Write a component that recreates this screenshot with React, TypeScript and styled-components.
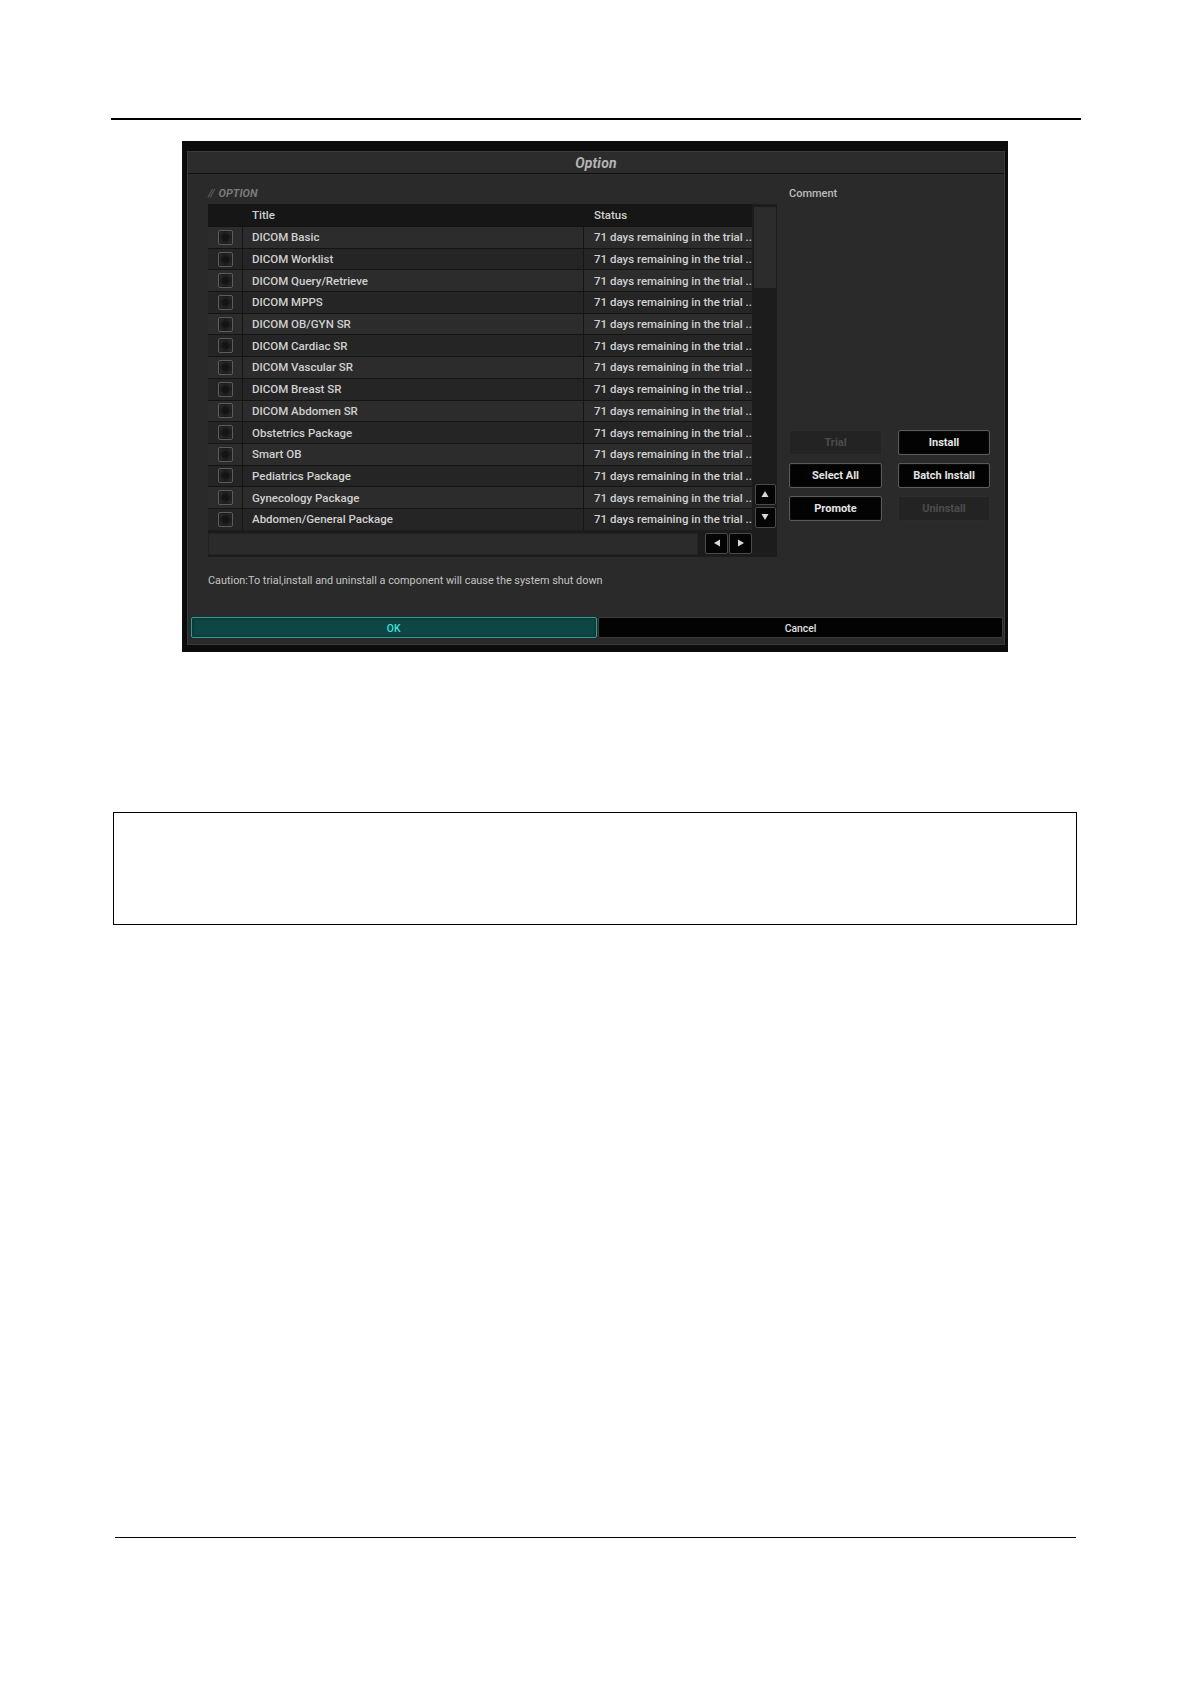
import React from "react";
import styled, { createGlobalStyle } from "styled-components";

const GlobalStyle = createGlobalStyle`
  html, body {
    margin: 0;
    padding: 0;
    background: #ffffff;
  }
  body {
    font-family: Roboto, "Liberation Sans", Arial, sans-serif;
  }
`;

const options = [
  "DICOM Basic",
  "DICOM Worklist",
  "DICOM Query/Retrieve",
  "DICOM MPPS",
  "DICOM OB/GYN SR",
  "DICOM Cardiac SR",
  "DICOM Vascular SR",
  "DICOM Breast SR",
  "DICOM Abdomen SR",
  "Obstetrics Package",
  "Smart OB",
  "Pediatrics Package",
  "Gynecology Package",
  "Abdomen/General Package",
];

const STATUS = "71 days remaining in the trial ..";

const Page = styled.div`
  width: 1191px;
  min-height: 1684px;
  padding-top: 118px;
  box-sizing: border-box;
  display: flex;
  flex-direction: column;
`;

const Rule = styled.div<{ $left: number; $width: number; $thick: number; $top?: number }>`
  margin-top: ${(p) => p.$top ?? 0}px;
  margin-left: ${(p) => p.$left}px;
  width: ${(p) => p.$width}px;
  height: 0;
  border-top: ${(p) => p.$thick}px solid #000;
`;

const Dialog = styled.div`
  margin-top: 21px;
  margin-left: 182px;
  width: 826px;
  height: 511px;
  box-sizing: border-box;
  background: #0c0c0c;
  padding: 10px 3px 7px 5px;
`;

const Panel = styled.div`
  height: 100%;
  box-sizing: border-box;
  background: #2a2a2a;
  border: 1px solid #3a3a3a;
  display: flex;
  flex-direction: column;
`;

const TitleBar = styled.div`
  height: 21px;
  line-height: 22px;
  text-align: center;
  background: #2c2c2c;
  border-bottom: 1px solid #111;
  color: #b4b4b4;
  font-size: 14px;
  font-style: italic;
  font-weight: 700;
  letter-spacing: 0.2px;
`;

const Body = styled.div`
  flex: 1;
  padding: 13px 0 0 20px;
  display: flex;
  flex-direction: column;
`;

const Main = styled.div`
  display: flex;
  gap: 12px;
`;

const LeftPane = styled.div`
  width: 569px;
  display: flex;
  flex-direction: column;
`;

const SectionLabel = styled.div`
  height: 14px;
  line-height: 14px;
  font-size: 11px;
  font-style: italic;
  font-weight: 700;
  color: #7a7a7a;
  margin-bottom: 3px;
  display: flex;
  gap: 5px;
`;

const Slashes = styled.span`
  color: #6a6a6a;
  font-weight: 400;
  letter-spacing: -1px;
`;

const TableBox = styled.div`
  background: #1c1c1c;
  display: grid;
  grid-template-columns: 544px 25px;
  grid-template-rows: auto 27px;
`;

const List = styled.div`
  display: flex;
  flex-direction: column;
`;

const Row = styled.div<{ $head?: boolean; $alt?: boolean }>`
  display: grid;
  grid-template-columns: 34px 341px 169px;
  height: ${(p) => (p.$head ? 22 : 21.7)}px;
  box-sizing: border-box;
  background: ${(p) => (p.$head ? "#161616" : p.$alt ? "#252525" : "#2c2c2c")};
  border-top: ${(p) => (p.$head ? "0" : "1px solid #141414")};
  color: #d0d0d0;
  font-size: 11.5px;
  font-weight: 500;
`;

const Cell = styled.div<{ $pad?: number; $center?: boolean }>`
  display: flex;
  align-items: center;
  justify-content: ${(p) => (p.$center ? "center" : "flex-start")};
  padding-left: ${(p) => p.$pad ?? 0}px;
  border-left: 1px solid #151515;
  white-space: nowrap;
  overflow: hidden;
  &:first-child {
    border-left: 0;
  }
`;

const Check = styled.div`
  width: 15px;
  height: 15px;
  box-sizing: border-box;
  border: 1px solid #5c5c5c;
  border-radius: 2px;
  background: radial-gradient(circle at 50% 50%, #141414 30%, #3a3a3a 100%);
  box-shadow: inset 0 0 2px #000;
`;

const ScrollCol = styled.div`
  grid-row: 1;
  grid-column: 2;
  display: flex;
  flex-direction: column;
  align-items: center;
  padding: 3px 0 0 1px;
`;

const Thumb = styled.div`
  width: 22px;
  height: 81px;
  background: #2c2c2c;
`;

const Spacer = styled.div`
  flex: 1;
`;

const ArrowButton = styled.div<{ $w?: number }>`
  width: ${(p) => p.$w ?? 21}px;
  height: 21px;
  box-sizing: border-box;
  background: #050505;
  border: 1px solid #4a4a4a;
  border-radius: 2px;
  display: flex;
  align-items: center;
  justify-content: center;
  margin-bottom: 2px;
`;

const BottomBar = styled.div`
  grid-row: 2;
  grid-column: 1;
  display: flex;
  align-items: flex-start;
  padding-top: 3px;
  gap: 7px;
`;

const HBar = styled.div`
  width: 490px;
  height: 22px;
  box-sizing: border-box;
  background: #2b2b2b;
  border: 1px solid #222;
`;

const ArrowPair = styled.div`
  display: flex;
  gap: 1px;
`;

const RightPane = styled.div`
  display: flex;
  flex-direction: column;
`;

const CommentLabel = styled.div`
  height: 14px;
  line-height: 14px;
  font-size: 11px;
  font-weight: 500;
  color: #bcbcbc;
`;

const ButtonGrid = styled.div`
  margin-top: 229px;
  display: grid;
  grid-template-columns: 93px 92px;
  column-gap: 16px;
  row-gap: 8px;
`;

const ActionButton = styled.div<{ $disabled?: boolean }>`
  height: 25px;
  box-sizing: border-box;
  display: flex;
  align-items: center;
  justify-content: center;
  border-radius: 2px;
  font-size: 11px;
  font-weight: 700;
  background: ${(p) => (p.$disabled ? "#232323" : "#030303")};
  border: 1px solid ${(p) => (p.$disabled ? "#2c2c2c" : "#5a5a5a")};
  color: ${(p) => (p.$disabled ? "#4c4c4c" : "#e4e4e4")};
  box-shadow: ${(p) => (p.$disabled ? "none" : "inset 0 0 2px #222")};
`;

const Caution = styled.div`
  margin-top: 16px;
  height: 14px;
  line-height: 14px;
  font-size: 11.5px;
  color: #c4c4c4;
  white-space: nowrap;
  transform: scaleX(0.945);
  transform-origin: left center;
`;

const Footer = styled.div`
  display: flex;
  gap: 1px;
  padding: 0 1px 6px 3px;
`;

const FooterButton = styled.div<{ $primary?: boolean }>`
  flex: 1;
  height: 21px;
  box-sizing: border-box;
  display: flex;
  align-items: center;
  justify-content: center;
  border-radius: 2px;
  font-size: 11.5px;
  font-weight: 500;
  background: ${(p) => (p.$primary ? "#0d4644" : "#030303")};
  border: 1px solid ${(p) => (p.$primary ? "#2a9e95" : "#3c3c3c")};
  color: ${(p) => (p.$primary ? "#3fe0da" : "#e0e0e0")};
  box-shadow: ${(p) => (p.$primary ? "inset 0 0 3px #062826" : "none")};
`;

const FooterLabel = styled.span`
  display: inline-block;
  transform: scaleX(0.9);
`;

const NoteBox = styled.div`
  margin-top: 160px;
  margin-left: 113px;
  width: 964px;
  height: 113px;
  box-sizing: border-box;
  border: 1px solid #000;
`;

type Dir = "up" | "down" | "left" | "right";

const Tri: React.FC<{ dir: Dir }> = ({ dir }) => {
  const pts: Record<Dir, string> = {
    up: "4,1 7.5,7 0.5,7",
    down: "0.5,1 7.5,1 4,7",
    left: "7,0.5 7,7.5 1,4",
    right: "1,0.5 1,7.5 7,4",
  };
  return (
    <svg width="8" height="8" viewBox="0 0 8 8">
      <polygon points={pts[dir]} fill="#d8d8d8" />
    </svg>
  );
};

const App: React.FC = () => {
  return (
    <>
      <GlobalStyle />
      <Page>
        <Rule $left={111} $width={970} $thick={2} />
        <Dialog>
          <Panel>
            <TitleBar>Option</TitleBar>
            <Body>
              <Main>
                <LeftPane>
                  <SectionLabel>
                    <Slashes>//</Slashes>
                    <span>OPTION</span>
                  </SectionLabel>
                  <TableBox>
                    <List>
                      <Row $head>
                        <Cell />
                        <Cell $pad={9}>Title</Cell>
                        <Cell $pad={10}>Status</Cell>
                      </Row>
                      {options.map((title, i) => (
                        <Row key={title} $alt={i % 2 === 1}>
                          <Cell $center>
                            <Check />
                          </Cell>
                          <Cell $pad={9}>{title}</Cell>
                          <Cell $pad={10}>{STATUS}</Cell>
                        </Row>
                      ))}
                    </List>
                    <ScrollCol>
                      <Thumb />
                      <Spacer />
                      <ArrowButton>
                        <Tri dir="up" />
                      </ArrowButton>
                      <ArrowButton>
                        <Tri dir="down" />
                      </ArrowButton>
                    </ScrollCol>
                    <BottomBar>
                      <HBar />
                      <ArrowPair>
                        <ArrowButton $w={23}>
                          <Tri dir="left" />
                        </ArrowButton>
                        <ArrowButton $w={23}>
                          <Tri dir="right" />
                        </ArrowButton>
                      </ArrowPair>
                    </BottomBar>
                  </TableBox>
                </LeftPane>
                <RightPane>
                  <CommentLabel>Comment</CommentLabel>
                  <ButtonGrid>
                    <ActionButton $disabled>Trial</ActionButton>
                    <ActionButton>Install</ActionButton>
                    <ActionButton>Select All</ActionButton>
                    <ActionButton>Batch Install</ActionButton>
                    <ActionButton>Promote</ActionButton>
                    <ActionButton $disabled>Uninstall</ActionButton>
                  </ButtonGrid>
                </RightPane>
              </Main>
              <Caution>
                Caution:To trial,install and uninstall a component will cause the system shut down
              </Caution>
            </Body>
            <Footer>
              <FooterButton $primary>
                <FooterLabel>OK</FooterLabel>
              </FooterButton>
              <FooterButton>
                <FooterLabel>Cancel</FooterLabel>
              </FooterButton>
            </Footer>
          </Panel>
        </Dialog>
        <NoteBox />
        <Rule $left={115} $width={961} $thick={1} $top={612} />
      </Page>
    </>
  );
};

export default App;
